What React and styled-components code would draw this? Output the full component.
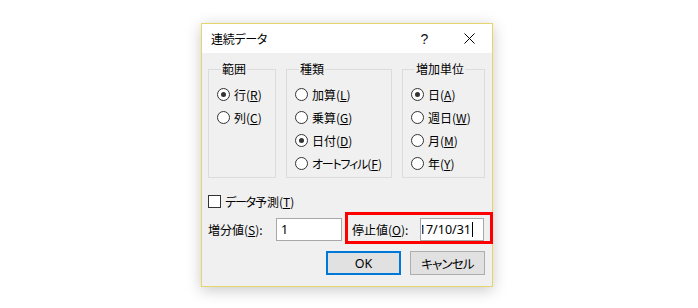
import React from 'react';
import styled, { createGlobalStyle } from 'styled-components';

const Global = createGlobalStyle`
  html, body { margin: 0; padding: 0; background: #ffffff; }
  body { font-family: "Noto Sans CJK JP", "Noto Sans", sans-serif; }
`;

const Page = styled.div`
  width: 698px;
  height: 308px;
  box-sizing: border-box;
  padding: 23px 0 0 201px;
`;

const Dialog = styled.div`
  width: 292px;
  box-sizing: border-box;
  border: 1px solid #e6d46c;
  background: #f0f0f0;
  box-shadow: 0 3px 14px rgba(0, 0, 0, 0.22);
  font-size: 12px;
  color: #000;
  font-feature-settings: "palt";
`;

const TitleBar = styled.div`
  height: 29px;
  background: #ffffff;
  display: flex;
  align-items: center;
`;

const Title = styled.div`
  flex: 1;
  padding-left: 9px;
  font-size: 12px;
  line-height: 16px;
  letter-spacing: -0.3px;
`;

const TitleButton = styled.div`
  width: 45px;
  height: 29px;
  display: flex;
  align-items: center;
  justify-content: center;
  font-family: "Liberation Sans", sans-serif;
  font-size: 14px;
  color: #111;
`;

const Body = styled.div`
  padding: 8px 7px 11px 6px;
  display: flex;
  flex-direction: column;
`;

const Groups = styled.div`
  display: flex;
  align-items: stretch;
  gap: 10px;
`;

const Group = styled.fieldset`
  margin: 0;
  width: ${p => p.$w}px;
  box-sizing: border-box;
  border: 1px solid #dcdcdc;
  padding: 6px 0 2px 8px;
  min-width: 0;
`;

const Legend = styled.legend`
  margin-left: 4px;
  padding: 0 1px;
  font-size: 12px;
  line-height: 16px;
`;

const Option = styled.div`
  height: 23px;
  display: flex;
  align-items: center;
  gap: 4px;
  white-space: nowrap;
`;

const Label = styled.span`
  letter-spacing: ${p => (p.$tight ? '-1.2px' : '0')};
`;

const Radio = styled.span`
  width: 13px;
  height: 13px;
  box-sizing: border-box;
  border: 1px solid #333;
  border-radius: 50%;
  background: #fff;
  display: flex;
  align-items: center;
  justify-content: center;
  flex: none;
  &::after {
    content: '';
    width: 5px;
    height: 5px;
    border-radius: 50%;
    background: #333;
    display: ${p => (p.$on ? 'block' : 'none')};
  }
`;

const CheckRow = styled.div`
  margin-top: 12px;
  height: 22px;
  display: flex;
  align-items: center;
  gap: 4px;
`;

const Check = styled.span`
  width: 13px;
  height: 13px;
  box-sizing: border-box;
  border: 1px solid #333;
  background: #fff;
  flex: none;
`;

const FieldRow = styled.div`
  display: flex;
  align-items: flex-start;
  gap: 3px;
`;

const Field = styled.div`
  display: flex;
  align-items: center;
  margin-top: ${p => p.$top || 0}px;
`;

const FieldLabel = styled.div`
  width: 68px;
  flex: none;
  white-space: nowrap;
`;

const TextBox = styled.div`
  width: ${p => p.$w}px;
  height: 23px;
  box-sizing: border-box;
  border: 1px solid #a8a8a8;
  background: #fff;
  display: flex;
  align-items: center;
  padding: ${p => (p.$end ? '0 10px 0 1px' : '0 0 0 4px')};
  white-space: nowrap;
  font-family: "Noto Sans", sans-serif;
  font-size: 12.5px;
`;

const Clip = styled.div`
  flex: 1;
  min-width: 0;
  overflow: hidden;
  display: flex;
  align-items: center;
  justify-content: flex-end;
`;

const Value = styled.span`
  flex: none;
`;

const Caret = styled.span`
  display: inline-block;
  width: 1px;
  height: 15px;
  background: #000;
  margin-left: 1px;
  flex: none;
`;

const Highlight = styled.div`
  border: 3px solid #ff0000;
  padding: 3px 6px 0 4px;
  margin-right: -2px;
`;

const Buttons = styled.div`
  margin-top: 7px;
  display: flex;
  justify-content: flex-end;
  gap: 9px;
`;

const Button = styled.div`
  width: 75px;
  height: 24px;
  box-sizing: border-box;
  border: ${p => (p.$primary ? '2px solid #0078d7' : '1px solid #adadad')};
  background: #e1e1e1;
  display: flex;
  align-items: center;
  justify-content: center;
  font-family: "Noto Sans", "Noto Sans CJK JP", sans-serif;
  font-size: 12.5px;
  letter-spacing: ${p => (p.$tight ? '-0.8px' : '0')};
`;

const groups = [
  { title: '範囲', w: 68, items: [['行', 'R', true], ['列', 'C', false]] },
  { title: '種類', w: 106, items: [['加算', 'L', false], ['乗算', 'G', false], ['日付', 'D', true], ['オートフィル', 'F', false, true]] },
  { title: '増加単位', w: 83, items: [['日', 'A', true], ['週日', 'W', false], ['月', 'M', false], ['年', 'Y', false]] },
];

export default function App() {
  return (
    <>
      <Global />
      <Page>
        <Dialog>
          <TitleBar>
            <Title>連続データ</Title>
            <TitleButton>?</TitleButton>
            <TitleButton>
              <svg width="11" height="11" viewBox="0 0 11 11">
                <path d="M0.5 0.5 L10.5 10.5 M10.5 0.5 L0.5 10.5" stroke="#000" strokeWidth="1" />
              </svg>
            </TitleButton>
          </TitleBar>
          <Body>
            <Groups>
              {groups.map(g => (
                <Group key={g.title} $w={g.w}>
                  <Legend>{g.title}</Legend>
                  {g.items.map(([label, key, on, tight]) => (
                    <Option key={label}>
                      <Radio $on={on} />
                      <span>
                        <Label $tight={tight}>{label}</Label>(<u>{key}</u>)
                      </span>
                    </Option>
                  ))}
                </Group>
              ))}
            </Groups>
            <CheckRow>
              <Check />
              <span>
                <Label $tight>データ</Label>予測(<u>T</u>)
              </span>
            </CheckRow>
            <FieldRow>
              <Field $top={6}>
                <FieldLabel>
                  増分値(<u>S</u>):
                </FieldLabel>
                <TextBox $w={66}>1</TextBox>
              </Field>
              <Highlight>
                <Field>
                  <FieldLabel>
                    停止値(<u>O</u>):
                  </FieldLabel>
                  <TextBox $w={64} $end>
                    <Clip>
                      <Value>2017/10/31</Value>
                      <Caret />
                    </Clip>
                  </TextBox>
                </Field>
              </Highlight>
            </FieldRow>
            <Buttons>
              <Button $primary>OK</Button>
              <Button $tight>キャンセル</Button>
            </Buttons>
          </Body>
        </Dialog>
      </Page>
    </>
  );
}
